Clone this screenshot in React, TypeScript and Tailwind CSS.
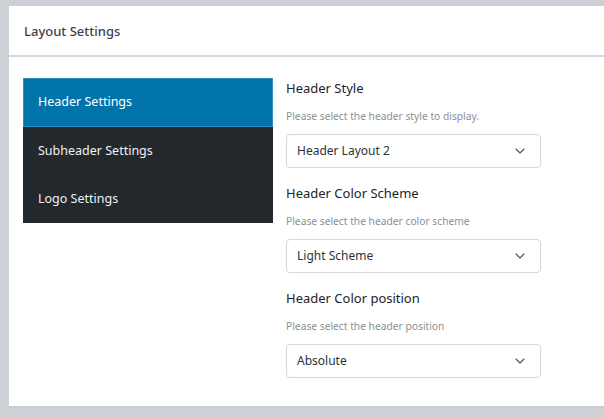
import { ChevronDown } from 'lucide-react'

const tabs = ['Header Settings', 'Subheader Settings', 'Logo Settings']

const fields = [
  { label: 'Header Style', help: 'Please select the header style to display.', value: 'Header Layout 2' },
  { label: 'Header Color Scheme', help: 'Please select the header color scheme', value: 'Light Scheme' },
  { label: 'Header Color position', help: 'Please select the header position', value: 'Absolute' },
]

const App = () => {
  return (
    <div
      className="w-[604px] h-[418px] overflow-hidden bg-[#cdd0d4] pt-[6px] pl-[9px]"
      style={{ fontFamily: '"Noto Sans", "Open Sans", sans-serif' }}
    >
      <div className="bg-white h-[402px] border-b-2 border-[#c9ccd0]">
        {/* Card header */}
        <div className="h-[51px] flex items-center px-[15px] border-b-2 border-[#d6d8db]">
          <h2 className="text-[13px] font-medium text-[#3c434a] pt-[2px]">Layout Settings</h2>
        </div>

        <div className="flex pt-[21px] pl-[14px]">
          {/* Tabs */}
          <nav className="w-[250px] bg-[#23282d] self-start">
            {tabs.map((t, i) => (
              <div
                key={t}
                className={
                  i === 0
                    ? 'h-[49px] flex items-center pl-[14px] text-[12.5px] text-white bg-[#0073aa] border border-[#2d8ec0]'
                    : 'h-[48px] flex items-center pl-[15px] text-[12.5px] text-[#f0f0f1]'
                }
              >
                {t}
              </div>
            ))}
          </nav>

          {/* Fields */}
          <div className="pl-[13px] w-[268px]">
            {fields.map((f) => (
              <div key={f.label} className="h-[105px]">
                <div className="pt-[1px] text-[13px] font-[450] text-[#1d2327] leading-[18px]">{f.label}</div>
                <p className="mt-[12px] text-[10.25px] text-[#8c8f94] leading-[14px]">{f.help}</p>
                <div className="mt-[11px] w-[255px] h-[34px] border border-[#d5d7da] rounded-[4px] flex items-center justify-between pl-[10px] pr-[12px]">
                  <span className="text-[12px] text-[#2c3338]">{f.value}</span>
                  <ChevronDown className="w-4 h-4 text-[#50575e]" strokeWidth={1.75} />
                </div>
              </div>
            ))}
          </div>
        </div>
      </div>
    </div>
  )
}

export default App
